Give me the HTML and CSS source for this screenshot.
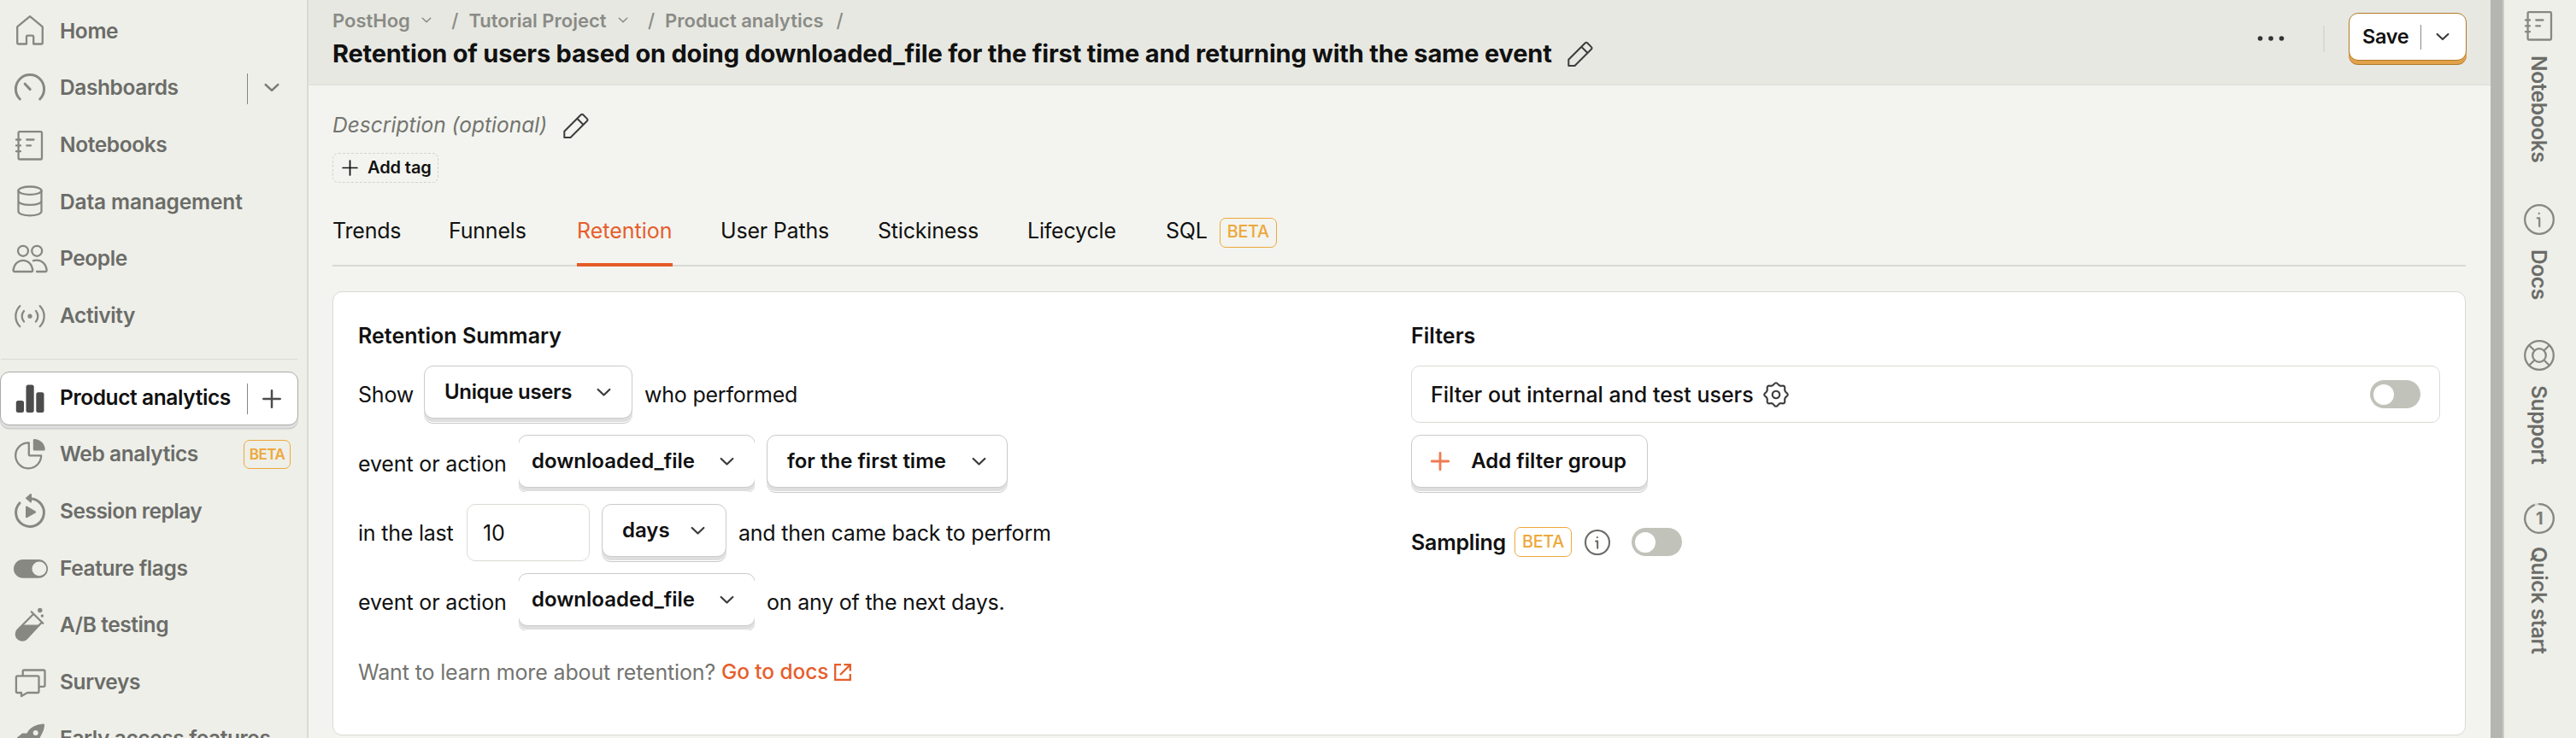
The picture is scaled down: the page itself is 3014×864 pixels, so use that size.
FILE: index.html
```html
<!DOCTYPE html>
<html lang="en">
<head>
<meta charset="utf-8">
<title>Retention insight</title>
<link rel="stylesheet" href="styles.css">
</head>
<body>
<svg class="defs" width="0" height="0" aria-hidden="true">
  <symbol id="notebook" viewBox="0 0 40 40"><path d="M8 4.2H32.6q1.4 0 1.4 1.4V35.1q0 1.4-1.4 1.4H8q-1.4 0-1.4-1.4V5.6Q6.6 4.2 8 4.2ZM4 13.5H9M4 20.4H9M4 27.2H9M16.3 13.5H24.5M16.3 20.4H21"/></symbol>
  <symbol id="chevron" viewBox="0 0 20 12"><path d="M2 2.2L10 9.8L18 2.2"/></symbol>
  <symbol id="plus" viewBox="0 0 22 22"><path d="M11 1.3V20.7M1.3 11H20.7"/></symbol>
  <symbol id="pencil" viewBox="0 0 30 30"><path d="M1.3 29V21.8L20.8 2.3q1.2-1.2 2.4 0L28 7.1q1.2 1.2 0 2.4L8.5 29ZM16.5 7L23.3 13.8"/></symbol>
  <symbol id="info" viewBox="0 0 36 36"><circle cx="18" cy="18" r="16.8"/><path d="M15.8 16.3H18.2V26"/><path d="M17.8 10.8V11"/></symbol>
</svg>
<div class="app">
  <nav class="sidebar">
    <a class="item"><svg class="icon" viewBox="0 0 40 40"><path d="M20 2.2L5.2 14.3V33Q5.2 34.5 6.7 34.5H16V26Q16 24.6 17.4 24.6H22.8Q24.2 24.6 24.2 26V34.5H33.3Q34.8 34.5 34.8 33V14.3Z"/></svg><span>Home</span></a>
    <a class="item"><svg class="icon bold" viewBox="0 0 40 40"><path d="M8.3 33A16.6 16.6 0 1 1 31.7 33M14.2 15.2L20.2 21.6"/></svg><span>Dashboards</span><i class="side-action"><svg class="chev-l"><use href="#chevron"/></svg></i></a>
    <a class="item"><svg class="icon"><use href="#notebook"/></svg><span>Notebooks</span></a>
    <a class="item"><svg class="icon" viewBox="0 0 40 40"><ellipse cx="20" cy="7.2" rx="13.5" ry="4.7"/><path d="M6.5 7.2V31.6C6.5 34.3 12.5 36.4 20 36.4S33.5 34.3 33.5 31.6V7.2M6.5 19.3C6.5 22 12.5 23.9 20 23.9S33.5 22 33.5 19.3"/></svg><span class="loose">Data management</span></a>
    <a class="item"><svg class="icon" viewBox="0 0 40 40"><circle cx="12" cy="10.8" r="6"/><circle cx="28.2" cy="10.8" r="6"/><path d="M2.2 35H21.8Q23.4 35 23.2 33.2C22.5 26.5 18 21.8 12 21.8S1.300 26.500 .6 33.200Q.5 35 2.200 35ZM24 22.200Q26 21.600 28.200 21.700C34.500 22 39 26.500 39.600 33.200Q39.700 35 38 35H28"/></svg><span>People</span></a>
    <a class="item"><svg class="icon" viewBox="0 0 40 40"><path d="M8.300 8.300A17 17 0 0 0 8.300 32.300M31.700 8.300A17 17 0 0 1 31.700 32.300M13 14A9.700 9.700 0 0 0 13 26.600M27 14A9.700 9.700 0 0 1 27 26.600"/><circle class="fill" cx="20" cy="20.200" r="2.600"/></svg><span>Activity</span></a>
    <hr>
    <a class="item active"><svg class="icon solid" viewBox="0 0 40 40"><rect x="3.800" y="23" width="9.200" height="14" rx="2.500"/><rect x="15.500" y="4.500" width="9.200" height="32.500" rx="2.500"/><rect x="27.300" y="13.300" width="9.200" height="23.700" rx="2.500"/></svg><span>Product analytics</span><i class="side-action"><svg class="plus-l"><use href="#plus"/></svg></i></a>
    <a class="item"><svg class="icon" viewBox="0 0 40 40"><path d="M18.800 6.300A15 15 0 1 0 33.200 21.300H19.900Q18.800 21.300 18.800 20.200Z"/><path class="fill" d="M25 2A12.700 12.700 0 0 1 37.700 14.200Q37.700 15.500 36.300 15.500H25.300Q23.800 15.500 23.800 14V3.300Q23.800 2 25 2Z"/></svg><span>Web analytics</span><b class="beta small">BETA</b></a>
    <a class="item"><svg class="icon bold" viewBox="0 0 40 40"><path d="M21 4.700A16.400 16.400 0 1 1 8 9.900"/><path class="fill" d="M14.600 4.200L20.500-.9Q22-1.500 22 0V8.500Q22 9.900 20.500 9.200ZM15 15V26Q15 28 16.800 27L26.600 21.600Q28 20.500 26.600 19.500L16.800 13.800Q15 13 15 15Z"/></svg><span class="tight">Session replay</span></a>
    <a class="item"><svg class="icon" viewBox="0 0 40 40"><rect class="fill" x="1" y="10" width="40" height="21.800" rx="10.900"/><circle class="hole" cx="30.900" cy="20.900" r="8.400"/></svg><span>Feature flags</span></a>
    <a class="item"><svg class="icon" viewBox="0 0 40 40"><path d="M21.800 4.300L35.300 17.800M23.800 7.300L5.600 25.500A7.300 7.300 0 0 0 15.900 35.800L33 17.500"/><path class="fill" d="M11.500 19.500H31L15.900 35.800A7.300 7.300 0 0 1 5.600 25.500Z"/><circle class="fill" cx="31.800" cy="2.500" r="2.700"/><circle class="fill" cx="34.400" cy="9" r="1.800"/></svg><span>A/B testing</span></a>
    <a class="item"><svg class="icon" viewBox="0 0 40 40"><path d="M5.400 12.300H29Q30.500 12.300 30.500 13.800V30.500Q30.500 32 29 32H17L10 36V32H5.400Q3.900 32 3.900 30.500V13.800Q3.900 12.300 5.400 12.300ZM11.700 12V7Q11.700 5.500 13.200 5.500H36Q37.500 5.500 37.500 7V23.300Q37.500 24.800 36 24.800H30.500"/></svg><span>Surveys</span></a>
    <a class="item"><svg class="icon" viewBox="0 0 40 40"><path class="fill" d="M37 2.500C27 2.500 20 6.500 16.500 13.500H11L5 18.500V22H30L34 14C36.500 10 37 6 37 2.500Z"/><circle class="hole" cx="26.700" cy="13" r="3"/></svg><span>Early access features</span></a>
  </nav>

  <main class="main">
    <header class="header">
      <div class="heading">
        <div class="crumbs"><span>PostHog</span><svg class="chev-s"><use href="#chevron"/></svg><em>/</em><span>Tutorial Project</span><svg class="chev-s"><use href="#chevron"/></svg><em>/</em><span>Product analytics</span><em class="last">/</em></div>
        <h1>Retention of users based on doing downloaded_file for the first time and returning with the same event<svg class="pencil"><use href="#pencil"/></svg></h1>
      </div>
      <div class="actions">
        <svg class="dots" viewBox="0 0 32 8"><circle cx="3.500" cy="4" r="2.800"/><circle cx="16" cy="4" r="2.800"/><circle cx="28.500" cy="4" r="2.800"/></svg>
        <i class="rule"></i>
        <button class="save"><span>Save</span><i></i><svg class="chev-m"><use href="#chevron"/></svg></button>
      </div>
    </header>

    <section class="content">
      <div class="description"><span>Description (optional)</span><svg class="pencil"><use href="#pencil"/></svg></div>
      <button class="tag"><svg><use href="#plus"/></svg>Add tag</button>
      <div class="tabs">
        <a>Trends</a><a>Funnels</a><a class="on">Retention</a><a>User Paths</a><a>Stickiness</a><a>Lifecycle</a><a>SQL<b class="beta">BETA</b></a>
      </div>

      <div class="card">
        <div class="summary">
          <h2>Retention Summary</h2>
          <div class="row"><span class="w-show">Show</span><button class="btn w-users"><span class="squeeze">Unique users</span><svg class="chev-m"><use href="#chevron"/></svg></button><span>who performed</span></div>
          <div class="row"><span class="w-event">event or action</span><button class="btn cut"><span>downloaded_file</span><svg class="chev-m"><use href="#chevron"/></svg></button><button class="btn w-first"><span>for the first time</span><svg class="chev-m"><use href="#chevron"/></svg></button></div>
          <div class="row"><span class="w-last">in the last</span><div class="input">10</div><button class="btn w-days"><span>days</span><svg class="chev-m"><use href="#chevron"/></svg></button><span>and then came back to perform</span></div>
          <div class="row"><span class="w-event">event or action</span><button class="btn cut"><span>downloaded_file</span><svg class="chev-m"><use href="#chevron"/></svg></button><span>on any of the next days.</span></div>
          <p class="learn">Want to learn more about retention? <a>Go to docs<svg viewBox="0 0 20 20"><path d="M8 1.200H1.200V18.800H18.800V12M11.500 1.200H18.800V8.500M18.500 1.500L7 13"/></svg></a></p>
        </div>
        <div class="filters">
          <h2>Filters</h2>
          <div class="filter-box"><span>Filter out internal and test users</span><svg class="gear" viewBox="-16 -16 32 32"><path d="M2.400-12.060Q4.060-9.790 6.830-10.230Q10.960-10.960 10.230-6.830Q9.790-4.060 12.060-2.400Q15.500 0 12.060 2.400Q9.790 4.060 10.230 6.830Q10.960 10.960 6.830 10.230Q4.060 9.790 2.400 12.060Q0 15.500-2.400 12.060Q-4.060 9.790-6.830 10.230Q-10.960 10.960-10.230 6.830Q-9.790 4.060-12.060 2.400Q-15.500 0-12.060-2.400Q-9.790-4.060-10.230-6.830Q-10.960-10.960-6.830-10.230Q-4.060-9.790-2.400-12.060Q0-15.500 2.400-12.060Z"/><circle r="4.300"/></svg><i class="toggle"></i></div>
          <button class="btn add"><svg><use href="#plus"/></svg><span>Add filter group</span></button>
          <div class="sampling"><strong>Sampling</strong><b class="beta">BETA</b><svg class="info"><use href="#info"/></svg><i class="toggle"></i></div>
        </div>
      </div>
    </section>
  </main>

  <div class="scrollbar"></div>

  <aside class="rail">
    <a class="r-notebooks"><svg class="icon"><use href="#notebook"/></svg><span>Notebooks</span></a>
    <a class="r-docs"><svg class="ring"><use href="#info"/></svg><span>Docs</span></a>
    <a class="r-support"><svg class="ring" viewBox="0 0 36 36"><circle cx="18" cy="18" r="16.800"/><circle cx="18" cy="18" r="7.800"/><path d="M6.200 6.200L12.500 12.500M29.800 6.200L23.500 12.500M6.200 29.800L12.500 23.500M29.800 29.800L23.500 23.500"/></svg><span>Support</span></a>
    <a class="r-quick"><span class="count"><svg class="ring" viewBox="0 0 36 36"><circle class="track" cx="18" cy="18" r="16.800"/><path d="M18 1.200A16.800 16.800 0 1 1 11.800 2.400"/></svg><b>1</b></span><span>Quick start</span></a>
  </aside>
</div>
</body>
</html>
```
FILE: styles.css
```css
* { box-sizing: border-box; }
body { margin: 0; font: 25px/1.2 Inter, "Liberation Sans", sans-serif; color: #111; background: #f3f4ef; overflow: hidden; }
i, em { font-style: normal; }
button { font: inherit; color: inherit; padding: 0; margin: 0; }
svg { fill: none; stroke: currentColor; stroke-width: 2.3; stroke-linecap: round; stroke-linejoin: round; flex: none; overflow: visible; }
.defs { position: absolute; }
.app { display: flex; width: 3014px; height: 864px; overflow: hidden; }

/* Sidebar */
.sidebar { flex: none; width: 361px; height: 864px; overflow: hidden; background: #eeefe9; border-right: 2px solid #d9dad3; padding-top: 3.3px; display: flex; flex-direction: column; }
.item { flex: none; height: 66.6px; width: 349px; display: flex; align-items: center; padding: 0 9px 0 14.5px; color: #6b6c68; font-weight: 600; font-size: 24.5px; letter-spacing: -0.4px; white-space: nowrap; }
.item > span { margin-left: 15.5px; flex: 1; }
.loose { letter-spacing: -0.15px; }
.tight { letter-spacing: -0.5px; }
.icon { width: 40px; height: 40px; color: #878882; }
.icon.bold { stroke-width: 3; }
.icon .fill { fill: currentColor; stroke: none; }
.icon .hole { fill: #eeefe9; stroke: none; }
.icon.solid { fill: currentColor; stroke: none; }
.sidebar hr { flex: none; width: 347px; height: 1px; border: 0; background: #d9dad3; margin: 16.7px 0 11.7px 1px; }
.side-action { width: 51px; height: 36px; border-left: 1px solid #878882; display: flex; align-items: center; justify-content: center; color: #7b7c77; margin-top: 1px; }
.chev-l { width: 18px; height: 11px; stroke-width: 2.9; margin: -2px 0 0 6px; }
.plus-l { width: 22px; height: 22px; color: #4c4c4c; stroke-width: 2.5; margin-left: 6px; }
.active { height: 63px; margin: 2.300px 0 1.300px; padding-left: 13.5px; padding-right: 8px; background: #fff; border: 1px solid #a9aaa6; border-radius: 11px; box-shadow: 0 3.500px 0 #dedede, 0 4.500px 0 #c2c3bf; color: #111; }
.active .icon { color: #4c4c4c; }
.beta { height: 35px; border: 1px solid #eda83b; border-radius: 7px; color: #eda83b; font-size: 19.800px; font-weight: 500; width: 67px; display: flex; align-items: center; justify-content: center; letter-spacing: -0.3px; }
.beta.small { width: 55px; height: 34px; font-size: 17px; font-weight: 600; letter-spacing: -0.500px; }

/* Header */
.main { flex: none; width: 2553px; overflow: hidden; }
.header { height: 100px; background: #e7e8e2; border-bottom: 1px solid #dfe0da; display: flex; justify-content: space-between; padding: 10px 28px 0 28px; }
.crumbs { display: flex; align-items: center; height: 29px; font-size: 22px; font-weight: 600; color: #8a8b86; white-space: nowrap; }
.crumbs em { width: 32px; text-align: center; font-weight: 500; margin-left: 11.5px; }
.crumbs em.last { margin-left: 3px; }
.chev-s { width: 12px; height: 7px; margin-left: 13px; margin-top: -2px; stroke-width: 2.600; }
h1 { margin: 5px 0 0; height: 38px; display: flex; align-items: center; font-size: 29px; font-weight: 700; letter-spacing: -0.205px; white-space: nowrap; }
.pencil { width: 30px; height: 30px; color: #3c3c3c; stroke-width: 2; }
h1 .pencil { margin-left: 18px; }
.actions { display: flex; align-items: flex-start; }
.dots { width: 32px; height: 8px; fill: #333; stroke: none; margin: 31px 45px 0 0; }
.rule { width: 2px; height: 31px; background: #d9dad4; margin: 20px 28px 0 0; }
.save { width: 138px; height: 56px; margin-top: 5px; background: #fff; border: 1px solid #b17a26; border-radius: 11px; box-shadow: 0 4px 0 #e2a24a, 0 5px 0 #b17a26; display: flex; align-items: center; font-weight: 600; font-size: 23.5px; letter-spacing: -0.3px; padding-left: 15px; }
.save span { width: 68px; text-align: left; }
.save i { width: 1px; height: 29px; background: #8a8a86; margin-right: 17px; }
.chev-m { width: 17px; height: 10.500px; stroke-width: 2.700; color: #3c3c3c; }
.save .chev-m { width: 16px; height: 10px; }

/* Content */
.content { padding: 24px 29px 0 28px; }
.description { height: 46px; display: flex; align-items: center; font-style: italic; font-size: 24.500px; letter-spacing: 0.020px; color: #737470; }
.description .pencil { margin-left: 19px; }
.tag { margin-top: 9px; width: 124px; height: 35px; border: 1px dashed #d2d3cd; border-radius: 7px; background: none; display: flex; align-items: center; font-size: 20px; font-weight: 600; letter-spacing: -0.1px; padding: 0 0 1px 10px; }
.tag svg { width: 19px; height: 19px; margin-right: 11px; stroke-width: 2; }
.tabs { margin-top: 16px; height: 82px; border-bottom: 2px solid #d9dad4; display: grid; grid-template-columns: 80px 94px 112px 128px 119px 106px auto; column-gap: 56px; }
.tabs a { height: 82px; padding-top: 2px; border-bottom: 4px solid transparent; display: flex; align-items: center; letter-spacing: -0.2px; white-space: nowrap; }
.tabs .on { color: #e65e2c; border-bottom-color: #e65a27; letter-spacing: 0; }
.tabs .beta { margin-left: 14px; margin-top: 4px; }
.card { margin-top: 29px; height: 520px; background: #fff; border: 1px solid #d9dad2; border-radius: 11px; display: grid; grid-template-columns: 1232px 1204px; padding: 36px 29px 0 29px; letter-spacing: -0.22px; }
h2 { margin: 0 0 20px; font-size: 25px; font-weight: 600; line-height: 30px; letter-spacing: 0.03px; }
.row { height: 68px; margin-bottom: 13px; display: flex; align-items: center; gap: 14px; white-space: nowrap; }
.w-show { width: 63px; }
.w-event { width: 174px; letter-spacing: -0.15px; }
.w-last { width: 113px; }
.btn { align-self: flex-start; height: 62px; background: #fff; border: 1px solid #c9cac9; border-radius: 11px; box-shadow: 0 4px 0 #dedede, 0 5px 0 #fff, 0 6px 0 #c9cac9; display: flex; align-items: center; justify-content: space-between; font-weight: 600; font-size: 24px; letter-spacing: 0; padding: 0 24px; white-space: nowrap; }
.btn > span { margin-left: -1px; }
.squeeze { letter-spacing: -0.35px; }
.w-users { width: 244px; }
.w-first { width: 282px; }
.w-days { width: 146px; }
.cut { width: 278px; margin: 0 -1px; padding: 0 24px 0 16px; clip-path: inset(0 1px -5px 1px); }
.input { align-self: flex-start; width: 144px; height: 67px; border: 1px solid #dadbd3; border-radius: 10px; padding-left: 18px; display: flex; align-items: center; }
.learn { margin: 33px 0 0; height: 30px; display: flex; align-items: center; color: #737470; white-space: pre; letter-spacing: -0.15px; }
.learn a { color: #e65e2c; display: flex; align-items: center; font-weight: 500; font-size: 24.500px; letter-spacing: -0.1px; }
.learn svg { width: 20px; height: 20px; margin-left: 7px; stroke-linecap: butt; stroke-linejoin: miter; }
.filter-box { height: 67px; margin-bottom: 14px; border: 1px solid #dadbd3; border-radius: 10px; display: flex; align-items: center; padding: 0 22px 0 22px; font-weight: 500; letter-spacing: -0.01px; }
.gear { width: 32px; height: 32px; margin-left: 10px; color: #3c3c3c; stroke-width: 2.100; }
.toggle { width: 59px; height: 33px; border-radius: 17px; background: #c1c2b9; padding: 4.500px 4px; }
.toggle::before { content: ""; display: block; width: 24px; height: 24px; border-radius: 50%; background: #fff; }
.filter-box .toggle { margin-left: auto; }
.add { width: 277px; padding: 0 24px 0 22px; }
.add svg { width: 22px; height: 22px; color: #f07a50; stroke-width: 2.800; }
.sampling { margin-top: 46px; height: 35px; display: flex; align-items: center; }
.sampling strong { width: 121px; font-weight: 600; }
.info { width: 30px; height: 30px; margin: 0 25px 0 15px; color: #6b6c68; stroke-width: 2.500; }

/* Right side */
.scrollbar { flex: none; width: 16px; background: #b5b6b1; border-right: 2px solid #cbccc5; }
.rail { flex: none; width: 84px; padding-right: 2px; background: #eeefe9; display: flex; flex-direction: column; align-items: center; color: #6b6c68; font-weight: 600; font-size: 24.500px; letter-spacing: -0.4px; }
.rail a { display: flex; flex-direction: column; align-items: center; gap: 17px; }
.rail a > span:last-child { writing-mode: vertical-rl; line-height: 30px; white-space: nowrap; margin-right: 1px; }
.ring { width: 36px; height: 36px; color: #878882; }
.r-notebooks { height: 229px; padding-top: 10px; }
.rail .r-notebooks { gap: 15px; }
.r-docs { height: 159px; padding-top: 10px; }
.r-support { height: 181px; padding-top: 10px; }
.r-quick { padding-top: 20px; }
.rail .r-quick { gap: 15px; }
.count { display: grid; place-items: center; color: #7b7c77; }
.count > * { grid-area: 1 / 1; }
.count b { font-size: 20px; font-weight: 700; }
.count .track { stroke: #d5d6d0; }
```
